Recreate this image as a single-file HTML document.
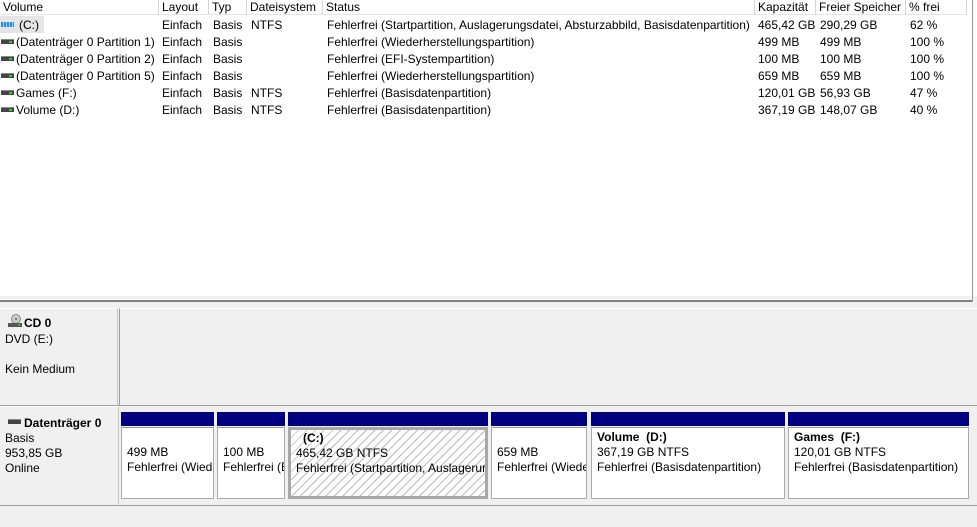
<!DOCTYPE html>
<html><head><meta charset="utf-8"><style>
*{margin:0;padding:0;box-sizing:border-box}
body{width:977px;height:527px;overflow:hidden;background:#f0f0f0;font-family:"Liberation Sans",sans-serif;font-size:12px;color:#000;position:relative}
.a{position:absolute;white-space:nowrap}
#list{position:absolute;left:0;top:0;width:977px;height:296px;background:#fff}
.hd{position:absolute;top:0;height:15px;line-height:14px;padding-left:3px;border-right:1px solid #d5d5d5;border-bottom:1px solid #e5e5e5;background:#fff}
.r{position:absolute;height:17px;line-height:17px;white-space:nowrap}
.ic{position:absolute;left:1px;width:13px;height:5px;background:#444;border-top:1px solid #888}
.ic:after{content:"";position:absolute;right:2px;top:1px;width:3px;height:2px;background:#3c3}
.part{position:absolute;top:412px;height:88px}
.bar{height:14px;background:#000080}
.box{position:absolute;top:15px;left:0;right:0;height:72px;background:#fff;border:1px solid #aaa;border-top-color:#999;padding:2px 0 0 5px;line-height:15px;overflow:hidden;white-space:nowrap}
.box b{font-weight:bold}
</style></head><body>
<div id="list">
<div class="hd" style="left:0;width:159px">Volume</div>
<div class="hd" style="left:159px;width:50px">Layout</div>
<div class="hd" style="left:209px;width:38px">Typ</div>
<div class="hd" style="left:247px;width:76px">Dateisystem</div>
<div class="hd" style="left:323px;width:432px">Status</div>
<div class="hd" style="left:755px;width:61px">Kapazität</div>
<div class="hd" style="left:816px;width:90px">Freier Speicher</div>
<div class="hd" style="left:906px;width:61px">% frei</div>

<div class="r" style="top:16px;left:0;width:44px;background:#e5e5e5"></div>
<div class="a" style="left:1px;top:22px;width:13px;height:5px;background:repeating-linear-gradient(90deg,#2a8ee8 0 2px,#9cd0ff 2px 3px)"></div>
<div class="ic" style="top:39px"></div><div class="ic" style="top:56px"></div><div class="ic" style="top:73px"></div><div class="ic" style="top:90px"></div><div class="ic" style="top:107px"></div>

<div class="r" style="top:17px;left:19px">(C:)</div>
<div class="r" style="top:34px;left:16px">(Datenträger 0 Partition 1)</div>
<div class="r" style="top:51px;left:16px">(Datenträger 0 Partition 2)</div>
<div class="r" style="top:68px;left:16px">(Datenträger 0 Partition 5)</div>
<div class="r" style="top:85px;left:16px">Games (F:)</div>
<div class="r" style="top:102px;left:16px">Volume (D:)</div>

<div class="r" style="top:17px;left:162px">Einfach</div><div class="r" style="top:34px;left:162px">Einfach</div><div class="r" style="top:51px;left:162px">Einfach</div><div class="r" style="top:68px;left:162px">Einfach</div><div class="r" style="top:85px;left:162px">Einfach</div><div class="r" style="top:102px;left:162px">Einfach</div>
<div class="r" style="top:17px;left:213px">Basis</div><div class="r" style="top:34px;left:213px">Basis</div><div class="r" style="top:51px;left:213px">Basis</div><div class="r" style="top:68px;left:213px">Basis</div><div class="r" style="top:85px;left:213px">Basis</div><div class="r" style="top:102px;left:213px">Basis</div>
<div class="r" style="top:17px;left:251px">NTFS</div><div class="r" style="top:85px;left:251px">NTFS</div><div class="r" style="top:102px;left:251px">NTFS</div>
<div class="r" style="top:17px;left:327px">Fehlerfrei (Startpartition, Auslagerungsdatei, Absturzabbild, Basisdatenpartition)</div>
<div class="r" style="top:34px;left:327px">Fehlerfrei (Wiederherstellungspartition)</div>
<div class="r" style="top:51px;left:327px">Fehlerfrei (EFI-Systempartition)</div>
<div class="r" style="top:68px;left:327px">Fehlerfrei (Wiederherstellungspartition)</div>
<div class="r" style="top:85px;left:327px">Fehlerfrei (Basisdatenpartition)</div>
<div class="r" style="top:102px;left:327px">Fehlerfrei (Basisdatenpartition)</div>
<div class="r" style="top:17px;left:758px">465,42 GB</div><div class="r" style="top:34px;left:758px">499 MB</div><div class="r" style="top:51px;left:758px">100 MB</div><div class="r" style="top:68px;left:758px">659 MB</div><div class="r" style="top:85px;left:758px">120,01 GB</div><div class="r" style="top:102px;left:758px">367,19 GB</div>
<div class="r" style="top:17px;left:820px">290,29 GB</div><div class="r" style="top:34px;left:820px">499 MB</div><div class="r" style="top:51px;left:820px">100 MB</div><div class="r" style="top:68px;left:820px">659 MB</div><div class="r" style="top:85px;left:820px">56,93 GB</div><div class="r" style="top:102px;left:820px">148,07 GB</div>
<div class="r" style="top:17px;left:910px">62 %</div><div class="r" style="top:34px;left:910px">100 %</div><div class="r" style="top:51px;left:910px">100 %</div><div class="r" style="top:68px;left:910px">100 %</div><div class="r" style="top:85px;left:910px">47 %</div><div class="r" style="top:102px;left:910px">40 %</div>
</div>
<div class="a" style="left:972px;top:0;width:1px;height:302px;background:#999"></div>
<div class="a" style="left:0;top:299px;width:972px;height:1px;background:#fff"></div>
<div class="a" style="left:0;top:300px;width:972px;height:2px;background:#808080"></div>

<div class="a" style="left:0;top:308px;width:118px;height:97px;border-top:1px solid #fff;border-right:1px solid #c8c8c8"></div>
<div class="a" style="left:119px;top:308px;width:858px;height:97px;border-left:1px solid #999;border-top:1px solid #fff"></div>
<div class="a" style="left:0;top:405px;width:977px;height:1px;background:#a0a0a0"></div>
<svg class="a" style="left:7px;top:313px" width="16" height="15"><circle cx="9" cy="6" r="4.5" fill="#ccc" stroke="#888"/><circle cx="9" cy="6" r="1.3" fill="#888"/><rect x="1" y="10" width="14" height="4" fill="#555"/><rect x="11" y="11" width="2" height="1.5" fill="#3c3"/></svg>
<div class="a" style="left:24px;top:316px;font-weight:bold">CD 0</div>
<div class="a" style="left:5px;top:332px">DVD (E:)</div>
<div class="a" style="left:5px;top:362px">Kein Medium</div>

<div class="a" style="left:0;top:406px;width:119px;height:100px;border-right:1px solid #c8c8c8;border-bottom:1px solid #a0a0a0;border-top:1px solid #fff"></div>
<div class="a" style="left:119px;top:505px;width:858px;height:1px;background:#a0a0a0"></div>
<div class="a" style="left:8px;top:419px;width:13px;height:5px;background:#444;border-top:1px solid #888"></div>
<div class="a" style="left:24px;top:416px;font-weight:bold">Datenträger 0</div>
<div class="a" style="left:5px;top:431px">Basis</div>
<div class="a" style="left:5px;top:446px">953,85 GB</div>
<div class="a" style="left:5px;top:461px">Online</div>

<div class="part" style="left:121px;width:93px"><div class="bar"></div><div class="box" style="padding-top:17px">499 MB<br>Fehlerfrei (Wiederherstellungspartition)</div></div>
<div class="part" style="left:217px;width:68px"><div class="bar"></div><div class="box" style="padding-top:17px">100 MB<br>Fehlerfrei (EFI-Systempartition)</div></div>
<div class="part" style="left:288px;width:200px"><div class="bar"></div><div class="box" style="border:3px solid #a8a8a8;padding:1px 0 0 5px;background:repeating-linear-gradient(135deg,#fff 0 5px,#bbb 5px 6px)"><b style="margin-left:7px">(C:)</b><br>465,42 GB NTFS<br>Fehlerfrei (Startpartition, Auslagerungsdatei, Absturzabbild)</div></div>
<div class="part" style="left:491px;width:96px"><div class="bar"></div><div class="box" style="padding-top:17px">659 MB<br>Fehlerfrei (Wiederherstellungspartition)</div></div>
<div class="part" style="left:591px;width:194px"><div class="bar"></div><div class="box"><b>Volume &nbsp;(D:)</b><br>367,19 GB NTFS<br>Fehlerfrei (Basisdatenpartition)</div></div>
<div class="part" style="left:788px;width:181px"><div class="bar"></div><div class="box"><b>Games &nbsp;(F:)</b><br>120,01 GB NTFS<br>Fehlerfrei (Basisdatenpartition)</div></div>
</body></html>
